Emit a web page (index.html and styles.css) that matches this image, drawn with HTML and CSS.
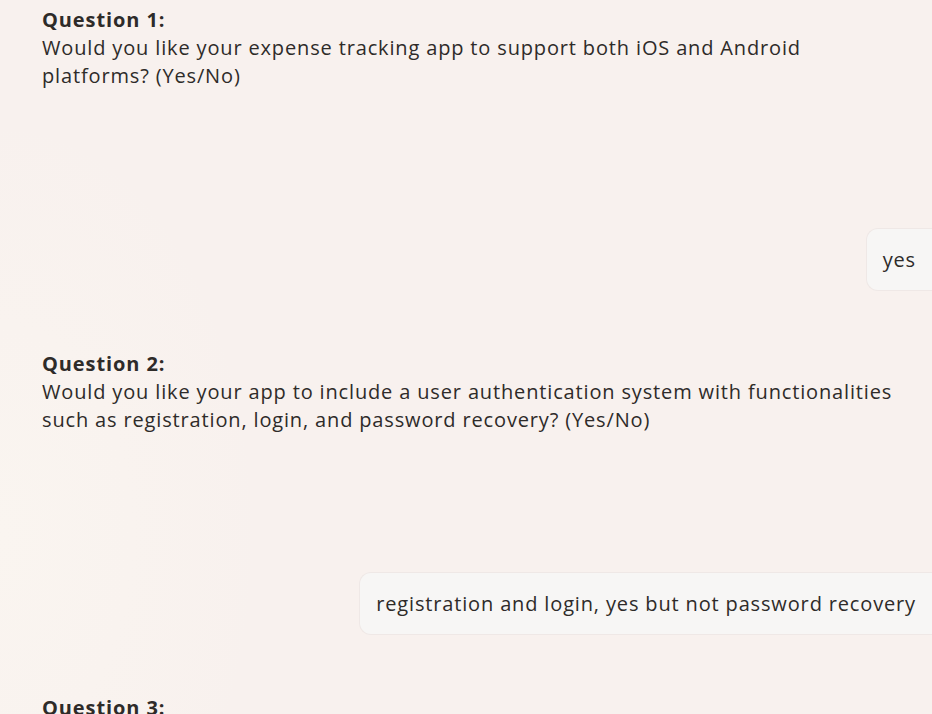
FILE: index.html
```html
<!DOCTYPE html>
<html lang="en">
<head>
<meta charset="utf-8">
<link rel="stylesheet" href="styles.css">
</head>
<body>
<main class="thread">
  <div class="msg msg-bot">
    <p class="q-title">Question 1:</p>
    <p class="q-text">Would you like your expense tracking app to support both iOS and Android platforms? (Yes/No)</p>
  </div>
  <div class="msg msg-user"><div class="bubble">yes</div></div>
  <div class="msg msg-bot">
    <p class="q-title">Question 2:</p>
    <p class="q-text">Would you like your app to include a user authentication system with functionalities such as registration, login, and password recovery? (Yes/No)</p>
  </div>
  <div class="msg msg-user"><div class="bubble">registration and login, yes but not password recovery</div></div>
  <div class="msg msg-bot">
    <p class="q-title">Question 3:</p>
  </div>
</main>
</body>
</html>
```
FILE: styles.css
```css
html, body {
  margin: 0;
  padding: 0;
  height: 100%;
  overflow: hidden;
}
body {
  background: #f8f1ee;
  background-image: radial-gradient(ellipse 260px 420px at 0% 75%, #faf5f0 0%, rgba(250,245,240,0) 100%);
  font-family: "Open Sans", Lato, sans-serif;
  color: #2e2b29;
  font-size: 20px;
  line-height: 28px;
  letter-spacing: 0.85px;
}
.thread {
  display: flex;
  flex-direction: column;
  padding: 6px 0 0 0;
}
.msg-bot {
  padding: 0 24px 0 42px;
  width: 866px;
}
.msg-bot p { margin: 0; }
.q-title { font-weight: 700; letter-spacing: 0.9px; }
.msg-user {
  display: flex;
  justify-content: flex-end;
  margin-top: 138px;
  margin-bottom: 59px;
}
.bubble {
  background: #f7f6f5;
  border: 1px solid #efe8e6;
  border-right: none;
  border-radius: 12px 0 0 12px;
  padding: 17px 16px 16px 16px;
}
```
